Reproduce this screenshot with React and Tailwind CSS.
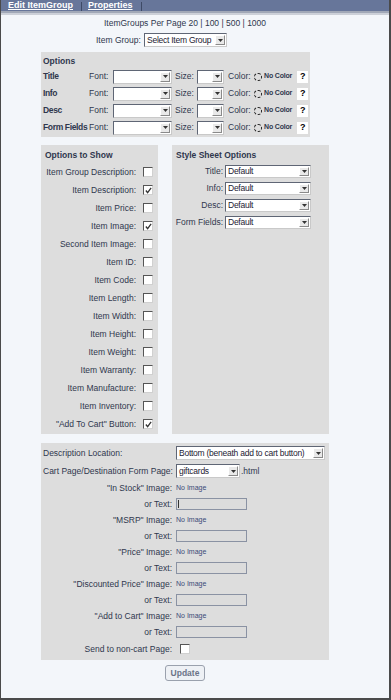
import React from "react";
import clsx from "clsx";

function Sel({ className, text }) {
  return (
    <div
      className={clsx(
        "flex items-stretch bg-white border border-t-[#5f6675] border-l-[#5f6675] border-r-[#c9c9c9] border-b-[#c9c9c9]",
        className
      )}
    >
      <span className="flex-1 pl-[2px] flex items-center overflow-hidden whitespace-nowrap text-[8.5px] tracking-[-0.25px] leading-none text-[#1d2233]">
        {text}
      </span>
      <span className="w-[10px] m-[1px] bg-[#e9e9e9] border border-t-white border-l-white border-r-[#8a8a8a] border-b-[#8a8a8a] flex items-center justify-center">
        <svg width="5" height="3" viewBox="0 0 5 3">
          <path d="M0 0H5L2.5 3Z" fill="#333" />
        </svg>
      </span>
    </div>
  );
}

function Check({ checked, className }) {
  return (
    <div
      className={clsx(
        "w-[10px] h-[10px] bg-white border border-t-[#555] border-l-[#555] border-r-[#d0d0d0] border-b-[#d0d0d0] flex items-center justify-center",
        className
      )}
    >
      {checked && (
        <svg width="7" height="7" viewBox="0 0 8 8">
          <path d="M1 4 L3 6.5 L7 1" fill="none" stroke="#333" strokeWidth="1.5" />
        </svg>
      )}
    </div>
  );
}

function TextInput({ caret }) {
  return (
    <div className="w-[71px] h-[12px] bg-[#dcdcdc] border border-[#8a92a3] flex items-center">
      {caret && <div className="w-[1px] h-[8px] ml-[1px] bg-[#333]" />}
    </div>
  );
}

function OptionRow({ label }) {
  return (
    <div className="h-[17px] flex items-center">
      <span className="w-[48px] pl-[2px] font-bold whitespace-nowrap text-[8.5px] tracking-[-0.35px]">{label}</span>
      <span className="w-[24px]">Font:</span>
      <Sel className="w-[59px] h-[14px]" text="" />
      <span className="w-[22px] ml-[3px]">Size:</span>
      <Sel className="w-[27px] h-[14px]" text="" />
      <span className="w-[26px] ml-[4px]">Color:</span>
      <span className="w-[8px] h-[8px] rounded-full border border-dashed border-[#222]" />
      <span className="ml-[2px] text-[7px] font-bold tracking-tight">No Color</span>
      <span className="ml-[5px] w-[11px] h-[12px] bg-white flex items-center justify-center font-bold text-[9px] text-black">
        ?
      </span>
    </div>
  );
}

const shows = [
  ["Item Group Description:", false],
  ["Item Description:", true],
  ["Item Price:", false],
  ["Item Image:", true],
  ["Second Item Image:", false],
  ["Item ID:", false],
  ["Item Code:", false],
  ["Item Length:", false],
  ["Item Width:", false],
  ["Item Height:", false],
  ["Item Weight:", false],
  ["Item Warranty:", false],
  ["Item Manufacture:", false],
  ["Item Inventory:", false],
  ['"Add To Cart" Button:', true],
];

const images = [
  '"In Stock" Image:',
  '"MSRP" Image:',
  '"Price" Image:',
  '"Discounted Price" Image:',
  '"Add to Cart" Image:',
];

export default function App() {
  return (
    <div className="w-[391px] h-[700px] flex flex-col bg-[#f3f6fa] border-l border-r-2 border-b-2 border-[#4a4a4a] font-['Liberation_Sans',Arial,sans-serif] text-[8.5px] text-[#2f374d] overflow-hidden">
      {/* tab bar */}
      <div className="flex flex-col">
        <div className="h-[11px] bg-[#67769a] flex items-end text-white font-bold text-[9px] leading-none">
          <span className="ml-[7px] mb-[1px] underline">Edit ItemGroup</span>
          <span className="ml-[8px] w-[1px] h-[9px] bg-[#a8b0c2] border-r border-[#3e4a66]" />
          <span className="ml-[6px] mb-[1px] underline">Properties</span>
          <span className="ml-[8px] w-[1px] h-[9px] bg-[#a8b0c2] border-r border-[#3e4a66]" />
        </div>
        <div className="h-[2px] bg-[#a1a8b7]" />
        <div className="h-[2px] bg-[#ccd0d8]" />
      </div>

      <div className="ml-[40px] w-[288px] flex flex-col">
        <div className="mt-[2px] h-[12px] flex items-center justify-center whitespace-nowrap">
          ItemGroups Per Page 20 | 100 | 500 | 1000
        </div>
        <div className="mt-[4px] h-[14px] flex items-center pl-[55px]">
          <span className="w-[48px]">Item Group:</span>
          <Sel className="w-[83px] h-[14px]" text="Select Item Group" />
        </div>

        {/* Options */}
        <div className="mt-[5px] w-[269px] h-[85px] bg-[#dddddd] flex flex-col pt-[3px]">
          <div className="h-[13px] pl-[2px] flex items-center font-bold">Options</div>
          <OptionRow label="Title" />
          <OptionRow label="Info" />
          <OptionRow label="Desc" />
          <OptionRow label="Form Fields" />
        </div>

        {/* two columns */}
        <div className="mt-[8px] flex gap-[14px]">
          <div className="w-[117px] h-[289px] bg-[#dddddd] flex flex-col pt-[3px]">
            <div className="h-[15px] pl-[4px] flex items-center font-bold whitespace-nowrap">
              Options to Show
            </div>
            {shows.map(([l, c]) => (
              <div key={l} className="h-[18px] flex items-center">
                <span className="w-[95px] text-right whitespace-nowrap">{l}</span>
                <Check checked={c} className="ml-[7px]" />
              </div>
            ))}
          </div>
          <div className="w-[157px] h-[289px] bg-[#dddddd] flex flex-col pt-[3px]">
            <div className="h-[15px] pl-[4px] flex items-center font-bold whitespace-nowrap">
              Style Sheet Options
            </div>
            {["Title:", "Info:", "Desc:", "Form Fields:"].map((l) => (
              <div key={l} className="h-[17px] flex items-center">
                <span className="w-[52px] text-right whitespace-nowrap pr-[1px]">{l}</span>
                <Sel className="ml-[1px] w-[86px] h-[13px]" text="Default" />
              </div>
            ))}
          </div>
        </div>

        {/* bottom box */}
        <div className="mt-[9px] w-[288px] h-[217px] bg-[#dddddd] flex flex-col pt-[1px]">
          <div className="h-[18px] flex items-center">
            <span className="w-[133px] pl-[2px] whitespace-nowrap">Description Location:</span>
            <Sel className="ml-[2px] w-[149px] h-[14px]" text="Bottom (beneath add to cart button)" />
          </div>
          <div className="h-[18px] flex items-center">
            <span className="w-[133px] pl-[2px] whitespace-nowrap">Cart Page/Destination Form Page:</span>
            <Sel className="ml-[2px] w-[64px] h-[14px]" text="giftcards" />
            <span className="ml-[1px]">.html</span>
          </div>
          {images.map((l, i) => (
            <React.Fragment key={l}>
              <div className="h-[16px] flex items-center">
                <span className="w-[131px] text-right whitespace-nowrap">{l}</span>
                <span className="ml-[4px] text-[7px] text-[#3b4a78]">No Image</span>
              </div>
              <div className="h-[16px] flex items-center">
                <span className="w-[131px] text-right whitespace-nowrap">or Text:</span>
                <div className="ml-[4px]">
                  <TextInput caret={i === 0} />
                </div>
              </div>
            </React.Fragment>
          ))}
          <div className="h-[18px] flex items-center">
            <span className="w-[131px] text-right whitespace-nowrap">Send to non-cart Page:</span>
            <Check className="ml-[8px]" />
          </div>
        </div>

        <div className="mt-[5px] flex justify-center">
          <div className="w-[40px] h-[16px] bg-[#eef1f5] border border-[#9aa1ad] rounded-[3px] flex items-center justify-center font-bold text-[#6b7487]">
            Update
          </div>
        </div>
      </div>
    </div>
  );
}
